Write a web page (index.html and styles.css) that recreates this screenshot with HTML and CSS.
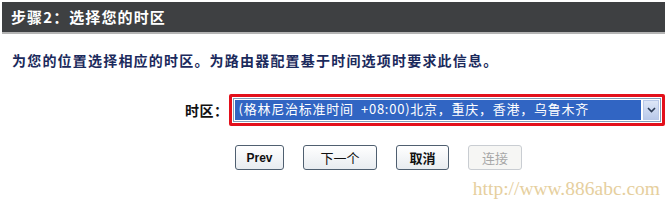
FILE: index.html
```html
<!DOCTYPE html>
<html lang="zh-CN">
<head>
<meta charset="utf-8">
<title>步骤2：选择您的时区</title>
<link rel="stylesheet" href="styles.css">
</head>
<body>
<div class="page">
  <div class="header">步骤2：选择您的时区</div>
  <p class="desc">为您的位置选择相应的时区。为路由器配置基于时间选项时要求此信息。</p>
  <div class="tz-row">
    <span class="tz-label">时区：</span>
    <div class="tz-frame">
      <div class="tz-select">
        <span class="tz-value">(格林尼治标准时间&nbsp;&nbsp;+08:00)北京，重庆，香港，乌鲁木齐</span>
        <span class="tz-arrow">
          <svg width="9" height="6" viewBox="0 0 9 6"><path d="M1 1 L4.5 4.5 L8 1" fill="none" stroke="#2b3b55" stroke-width="1.6"/></svg>
        </span>
      </div>
    </div>
  </div>
  <div class="btn-row">
    <button class="btn btn-prev">Prev</button>
    <button class="btn btn-next">下一个</button>
    <button class="btn btn-cancel">取消</button>
    <button class="btn btn-connect" disabled>连接</button>
  </div>
  <div class="watermark">http://www.886abc.com</div>
</div>
</body>
</html>
```
FILE: styles.css
```css
html, body {
  margin: 0;
  padding: 0;
  background: #ffffff;
}
.page {
  width: 668px;
  height: 207px;
  padding: 2px 3px 0 2px;
  box-sizing: border-box;
  font-family: "Noto Sans CJK SC", "Liberation Sans", sans-serif;
  overflow: hidden;
}
.header {
  height: 30px;
  line-height: 30px;
  background: #3e4042;
  border-bottom: 2px solid #b4b4b4;
  color: #ffffff;
  font-weight: bold;
  font-size: 15px;
  letter-spacing: 1.1px;
  padding-left: 9px;
}
.desc {
  margin: 17px 0 0 10px;
  font-size: 14px;
  line-height: 18px;
  font-weight: bold;
  color: #1b2a5c;
  letter-spacing: 1.2px;
}
.tz-row {
  display: flex;
  align-items: center;
  margin-top: 25px;
  padding-left: 183px;
}
.tz-label {
  flex: 0 0 43px;
  white-space: nowrap;
  font-size: 14px;
  font-weight: bold;
  color: #111;
  letter-spacing: 0.5px;
}
.tz-frame {
  border: 3px solid #e3101b;
  border-radius: 2px;
  padding: 1px;
  width: 429px;
}
.tz-select {
  display: flex;
  align-items: stretch;
  height: 20px;
  border: 1px solid #7f9db9;
  background: #fff;
  padding: 1px;
}
.tz-value {
  flex: 1;
  background: #3165c3;
  color: #fff;
  font-size: 13px;
  line-height: 18px;
  padding-left: 4px;
  letter-spacing: 0.75px;
  white-space: pre;
  overflow: hidden;
}
.tz-arrow {
  width: 16px;
  margin-left: 2px;
  background: linear-gradient(#dde6f7, #b9c9ea);
  border: 1px solid #b8c8e8;
  box-sizing: border-box;
  display: flex;
  align-items: center;
  justify-content: center;
}
.btn-row {
  display: flex;
  margin-top: 19px;
  padding-left: 233px;
}
.btn {
  height: 25px;
  border: 1px solid #4f5f70;
  border-radius: 3px;
  background: linear-gradient(#ffffff, #e8ecf0);
  font-family: "Noto Sans CJK SC", "Liberation Sans", sans-serif;
  font-size: 13px;
  color: #111;
  padding: 0;
  line-height: 22px;
}
.btn-prev {
  width: 49px;
  font-family: "Liberation Sans", sans-serif;
  font-weight: bold;
  font-size: 12px;
}
.btn-next {
  width: 74px;
  margin-left: 19px;
}
.btn-cancel {
  width: 53px;
  margin-left: 19px;
  font-weight: bold;
}
.btn-connect {
  width: 54px;
  margin-left: 19px;
  border-color: #c9cdd2;
  color: #a7a7a7;
  background: #f6f6f4;
}
.watermark {
  margin-top: 8px;
  text-align: right;
  padding-right: 5px;
  font-family: "Liberation Serif", serif;
  font-size: 19.5px;
  line-height: 22px;
  color: #e6cf9e;
}
```
